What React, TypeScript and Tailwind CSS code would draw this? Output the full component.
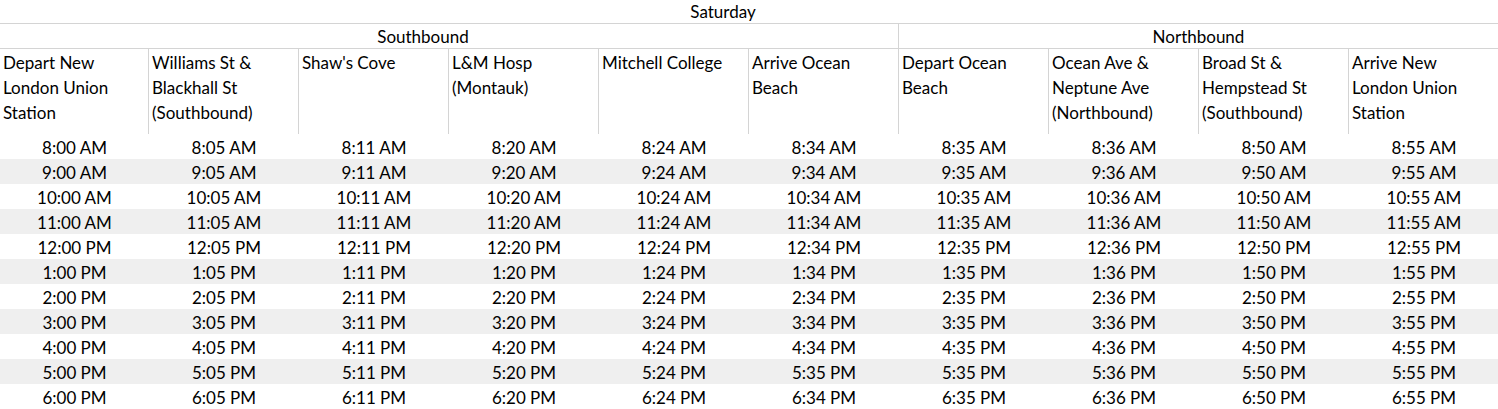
import React from 'react';

// Saturday schedule, Southbound then Northbound
const southStops = [
  'Depart New London Union Station',
  'Williams St & Blackhall St (Southbound)',
  "Shaw's Cove",
  'L&M Hosp (Montauk)',
  'Mitchell College',
  'Arrive Ocean Beach',
];

const northStops = [
  'Depart Ocean Beach',
  'Ocean Ave & Neptune Ave (Northbound)',
  'Broad St & Hempstead St (Southbound)',
  'Arrive New London Union Station',
];

const offsets = [0, 5, 11, 20, 24, 34, 35, 36, 50, 55];

function fmt(hour: number, min: number) {
  const h = hour % 12 === 0 ? 12 : hour % 12;
  const ampm = hour < 12 ? 'AM' : 'PM';
  return `${h}:${String(min).padStart(2, '0')} ${ampm}`;
}

const rows: string[][] = [];
for (let hour = 8; hour <= 18; hour++) {
  rows.push(
    offsets.map((off, i) => {
      // the 5 PM trip arrives at Ocean Beach a minute late
      if (hour === 17 && i === 5) return fmt(hour, 35);
      return fmt(hour, off);
    })
  );
}

const headers = [...southStops, ...northStops];

export default function App() {
  return (
    <div
      className="w-[1498px] h-[409px] overflow-hidden bg-white text-black text-[17px]"
      style={{ fontFamily: 'Lato, "Liberation Sans", sans-serif' }}
    >
      {/* Day title */}
      <div className="h-[24px] border-b border-[#d4d4d4] leading-[24px]">
        <div className="w-[1446px] text-center">Saturday</div>
      </div>

      {/* Direction */}
      <div className="flex h-[25px] border-b border-[#d4d4d4] leading-[25px]">
        <div className="w-[899px] border-r border-[#d4d4d4] pr-[52px] text-center">Southbound</div>
        <div className="flex-1 text-center">Northbound</div>
      </div>

      {/* Stop names */}
      <div className="grid grid-cols-[149px_repeat(9,150px)] h-[85px]">
        {headers.map((name, i) => (
          <div
            key={name}
            className={`pl-[3px] pr-1 pt-[1px] leading-[25px] ${i < 9 ? 'border-r border-[#d4d4d4]' : ''}`}
          >
            {name}
          </div>
        ))}
      </div>

      {/* Times */}
      {rows.map((row, r) => (
        <div
          key={r}
          className={`grid grid-cols-[149px_repeat(9,150px)] h-[25px] pt-[1px] leading-[25px] ${r % 2 === 1 ? 'bg-[#efefef]' : ''}`}
        >
          {row.map((t, c) => (
            <div key={c} className="text-center">
              {t}
            </div>
          ))}
        </div>
      ))}
    </div>
  );
}
